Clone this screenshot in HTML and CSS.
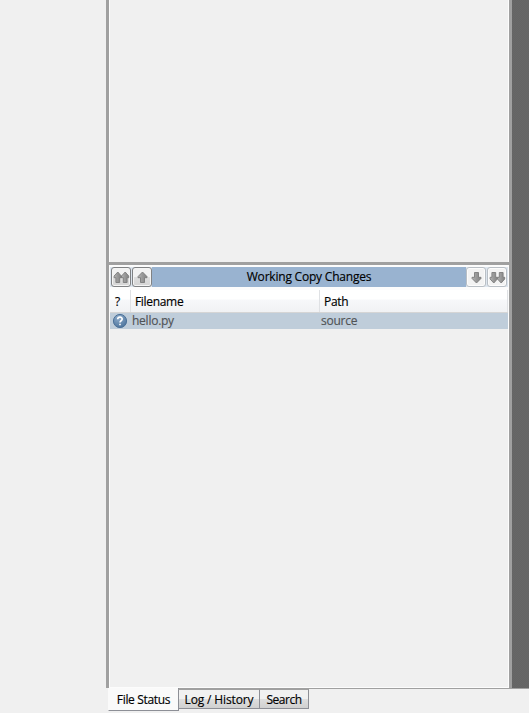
FILE: index.html
```html
<!DOCTYPE html>
<html lang="en">
<head>
<meta charset="utf-8">
<title>Working Copy Changes</title>
<link rel="stylesheet" href="styles.css">
</head>
<body>
<svg width="0" height="0" class="defs">
  <defs>
    <linearGradient id="arrow-fill" x1="0" y1="0" x2="1" y2="0">
      <stop offset="0" stop-color="#b5b5b5"/><stop offset=".5" stop-color="#989898"/><stop offset="1" stop-color="#858585"/>
    </linearGradient>
    <radialGradient id="ball" cx=".4" cy=".25" r=".8">
      <stop offset="0" stop-color="#8fadcc"/><stop offset="1" stop-color="#4b729b"/>
    </radialGradient>
    <path id="up" d="M5.5 1 10 5.6V6.7H7.5v4.8H3.5V6.7H1V5.6Z"/>
    <path id="slim" d="M4.5 1 8 5V6.7H6.4v4.8H2.6V6.7H.8V5Z"/>
  </defs>
</svg>
<div class="window">
  <aside class="sidebar"></aside>
  <main class="content">
    <section class="upper"><div class="pane"></div></section>
    <section class="changes">
      <header class="titlebar">
        <div class="group">
          <button class="tool" aria-label="Stage all"><svg width="17" height="13"><use href="#slim" x="7.7" class="arrow"/><use href="#slim" x=".3" class="arrow"/></svg></button>
          <button class="tool" aria-label="Stage"><svg width="11" height="13"><use href="#up" class="arrow"/></svg></button>
        </div>
        <h1 class="title">Working Copy Changes</h1>
        <div class="group">
          <button class="tool light" aria-label="Unstage"><svg width="11" height="13"><use href="#up" class="arrow" transform="matrix(1 0 0 -1 0 13)"/></svg></button>
          <button class="tool light" aria-label="Unstage all"><svg width="17" height="13"><g transform="matrix(1 0 0 -1 0 13)"><use href="#slim" x=".3" class="arrow"/><use href="#slim" x="7.7" class="arrow"/></g></svg></button>
        </div>
      </header>
      <div class="row head">
        <span class="cell mark">?</span><span class="cell">Filename</span><span class="cell">Path</span>
      </div>
      <div class="row file">
        <span class="cell state"><svg width="16" height="16"><circle cx="8" cy="8" r="6.6" fill="url(#ball)" stroke="#4d7299"/><path d="M5.7 6.2C5.8 3.4 10.2 3.4 10.2 6.1 10.2 7.8 8 7.7 8 9.5M8 10.7v1.5" fill="none" stroke="#fff" stroke-width="1.6"/></svg></span>
        <span class="cell">hello.py</span><span class="cell">source</span>
      </div>
    </section>
  </main>
  <div class="backdrop"></div>
</div>
<nav class="tabs">
  <span class="tab active">File Status</span>
  <span class="tab log">Log / History</span>
  <span class="tab search">Search</span>
</nav>
</body>
</html>
```
FILE: styles.css
```css
* { box-sizing: border-box; }
body {
  margin: 0;
  width: 529px;
  height: 713px;
  overflow: hidden;
  background: #f0f0f0;
  color: #000;
  font: 12px/16px "Open Sans", "Noto Sans", sans-serif;
  -webkit-text-stroke: .15px;
}
.defs { display: block; }
.window {
  display: grid;
  grid-template-columns: 106px 406px 17px;
  height: 688px;
}
.content {
  display: grid;
  grid-template-rows: 265px 1fr;
  border: solid #a0a0a0;
  border-width: 0 3px;
}
.upper {
  border-bottom: 3px solid #a0a0a0;
}
.pane {
  height: 100%;
  border: 1px solid #fcfcfc;
  border-width: 0 1px;
}
.changes {
  border: solid #fcfcfc;
  border-width: 2px 1px 1px;
}
.backdrop {
  background: repeating-conic-gradient(#646464 0 25%, #676767 0 50%) 0 0 / 2px 2px;
}
.titlebar {
  display: flex;
  justify-content: space-between;
  align-items: center;
  height: 20px;
  background: #99b3d0;
}
.group {
  display: flex;
  gap: 1px;
  background: #dde5ee;
}
.group:first-child { padding-left: 1px; }
.group:last-child { padding-right: 1px; }
.title {
  margin: 0;
  font: inherit;
  letter-spacing: -.21px;
}
.tool {
  display: flex;
  align-items: center;
  justify-content: center;
  width: 20px;
  height: 20px;
  padding: 0;
  border: 1px solid #808284;
  border-radius: 3px;
  background: linear-gradient(#f2f2f2 48%, #dedede 52%, #d4d4d4);
  box-shadow: inset 0 0 0 1px #f4f4f4;
}
.tool svg { flex: none; }
.light {
  border-color: #b9bfc5;
  background: #f3f3f3;
  box-shadow: inset 0 0 0 1px #fcfcfc;
}
.arrow { fill: url(#arrow-fill); stroke: #7c7c7c; stroke-width: .9; }
.row {
  display: grid;
  grid-template-columns: 21px 189px 1fr;
}
.head {
  height: 26px;
  padding-top: 3px;
  background: linear-gradient(#fcfcfc 3px, #fff 3px, #fff 12px, #f7f8fa 13px, #f1f2f4);
  border-bottom: 1px solid #d5d5d5;
  letter-spacing: -.32px;
}
.head .cell {
  padding: 4px 4px 2px;
  border-right: 1px solid #dfe1e4;
}
.head .mark { padding-left: 5px; }
.file {
  height: 16px;
  background: #bfcdda;
  color: #505356;
  letter-spacing: -.25px;
}
.file .cell { padding-left: 1px; }
.file .state { padding-left: 2px; }
.state svg { display: block; }
.tabs {
  display: flex;
  align-items: flex-start;
  padding-left: 108px;
  height: 25px;
  background: linear-gradient(#a0a0a0, #a0a0a0) 108px 0 / 100% 1px no-repeat;
}
.tab {
  height: 20px;
  margin-top: 1px;
  border: 1px solid #8d8f96;
  border-top-color: #a0a0a0;
  background: linear-gradient(#f1f1f1 48%, #dedede 52%, #d0d0d0);
  text-align: center;
  line-height: 19px;
  white-space: nowrap;
}
.active {
  width: 71px;
  height: 23px;
  margin-top: 0;
  border-top: 0;
  border-left-color: #fafafa;
  background: #fafafa;
  line-height: 23px;
  letter-spacing: -.33px;
}
.log { width: 82px; margin-left: -1px; letter-spacing: -.13px; }
.search { width: 50px; margin-left: -1px; letter-spacing: -.5px; }
```
